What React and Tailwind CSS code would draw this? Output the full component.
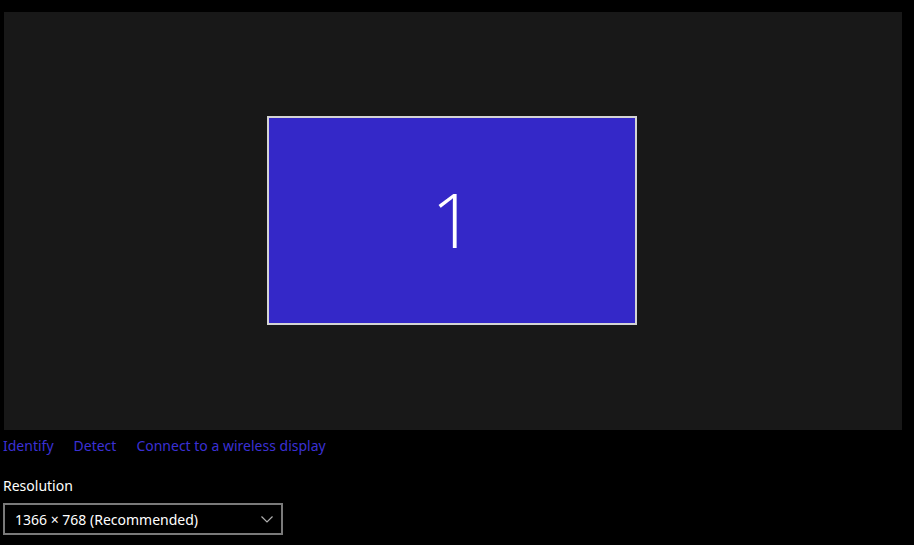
const links = ["Identify", "Detect", "Connect to a wireless display"]

const Chevron = () => (
    <svg width="12" height="7" viewBox="0 0 12 7" className="text-[#b0b0b0]">
        <polyline points="0.5,0.5 6,6 11.5,0.5" fill="none" stroke="currentColor" strokeWidth="1.2" />
    </svg>
)

const App = () => {
    return (
        <div className="w-[914px] h-[545px] bg-black overflow-hidden" style={{ fontFamily: '"Noto Sans", "Liberation Sans", sans-serif' }}>
            <div className="ml-[4px] mt-[12px] w-[898px] h-[418px] bg-[#181818] flex justify-center pt-[104px]">
                <div className="w-[370px] h-[209px] bg-[#3428c8] border-2 border-[#d4d4d4] flex items-center justify-center -ml-[2px]">
                    <span className="text-white text-[76px] font-extralight leading-none -mt-[4px] ml-[2px]" style={{ fontFamily: '"Open Sans", "Liberation Sans", sans-serif' }}>1</span>
                </div>
            </div>

            <div className="flex gap-[20px] pl-[3px] mt-[6px] text-[14px] leading-[20px] text-[#3b30d4]">
                {links.map(link => (
                    <span key={link}>{link}</span>
                ))}
            </div>

            <div className="pl-[3px] mt-[20px] text-[14px] leading-[20px] text-white">
                Resolution
            </div>

            <div className="ml-[3px] mt-[7px] w-[280px] h-[32px] border-2 border-[#7a7a7a] flex items-center justify-between pl-[10px] pr-[8px] text-white text-[14px]">
                <span>1366 × 768 (Recommended)</span>
                <Chevron />
            </div>
        </div>
    )
}

export default App
